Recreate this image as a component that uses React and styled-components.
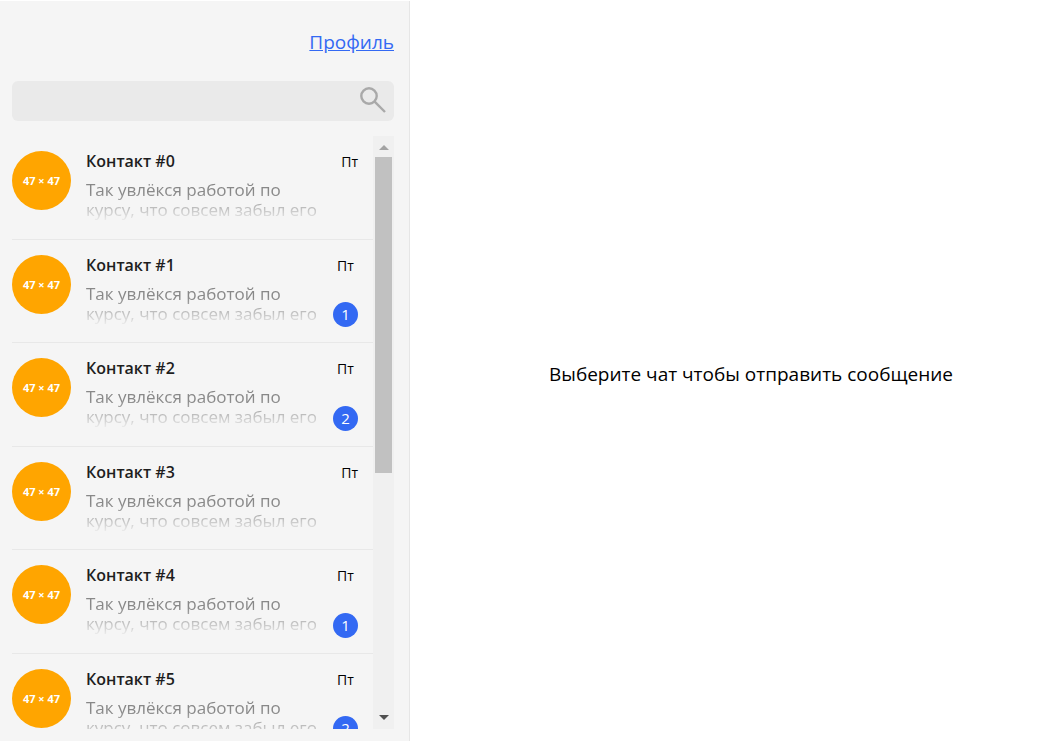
import React from "react";
import styled, { createGlobalStyle } from "styled-components";

const GlobalStyle = createGlobalStyle`
  *, *::before, *::after { box-sizing: border-box; }
  body {
    margin: 0;
    background: #fff;
    color: #000;
    font-family: "Open Sans", "Noto Sans", sans-serif;
  }
`;

const Page = styled.div`
  display: flex;
  height: 100vh;
  padding-top: 1px;
`;

const Sidebar = styled.aside`
  display: flex;
  flex-direction: column;
  flex: 0 0 410px;
  padding: 28px 15px 12px 12px;
  background: #f5f5f5;
  border-right: 1px solid #e6e6e6;
`;

const ProfileLink = styled.a`
  align-self: flex-end;
  color: #3369f3;
  font-size: 19px;
  line-height: 26px;
  text-decoration: underline;
`;

const Search = styled.label`
  display: flex;
  align-items: center;
  flex: none;
  height: 40px;
  margin: 26px 0 15px;
  padding-right: 8px;
  background: #eaeaea;
  border-radius: 6px;
`;

const SearchInput = styled.input`
  flex: 1;
  min-width: 0;
  height: 100%;
  padding: 0 12px;
  border: 0;
  outline: 0;
  background: transparent;
  font: inherit;
  font-size: 16px;
`;

const ListArea = styled.div`
  display: flex;
  flex: 1;
  min-height: 0;
`;

const ChatList = styled.ul`
  flex: 1;
  min-width: 0;
  margin: 0;
  padding: 0;
  overflow-x: hidden;
  overflow-y: auto;
  scrollbar-width: none;
  list-style: none;
`;

const Chat = styled.li`
  display: flex;
  height: 104px;
  padding: 15px 15px 15px 0;
  border-bottom: 1px solid #e8e8e8;

  &:nth-child(even) {
    height: 103px;
  }
`;

const Avatar = styled.div`
  display: flex;
  align-items: center;
  justify-content: center;
  flex: none;
  width: 59px;
  height: 59px;
  margin-right: 15px;
  border-radius: 50%;
  background: #ffa500;
  color: #fff;
  font-size: 11px;
  font-weight: 700;
`;

const ChatBody = styled.div`
  flex: 1;
  min-width: 0;
`;

const ChatName = styled.h2`
  margin: 0;
  color: #1e1e1e;
  font-size: 16px;
  font-weight: 600;
  line-height: 21px;
`;

const Preview = styled.p`
  width: 236px;
  margin: 8px 0 0;
  padding-bottom: 3px;
  color: #888;
  font-size: 17px;
  font-weight: 400;
  line-height: 20px;
  mask-image: linear-gradient(#000 30%, transparent 100%);
`;

const Meta = styled.div`
  display: flex;
  flex-direction: column;
  align-items: center;
  justify-content: space-between;
`;

const Day = styled.time`
  font-size: 14px;
  line-height: 21px;
`;

const Badge = styled.span`
  display: flex;
  align-items: center;
  justify-content: center;
  width: 25px;
  height: 25px;
  padding-bottom: 2px;
  border-radius: 50%;
  background: #3369f3;
  color: #fff;
  font-size: 15px;
  line-height: 20px;
`;

const ScrollBar = styled.div`
  display: flex;
  flex-direction: column;
  flex: none;
  width: 21px;
  padding: 0 2px;
  background: #f0f0f0;
`;

const ScrollArrow = styled.div`
  display: flex;
  align-items: center;
  justify-content: center;
  flex: none;
  height: 21px;
  padding: ${(p) => (p.$active ? "0 0 2px" : "2px 0 0")};
  color: ${(p) => (p.$active ? "#505050" : "#a3a3a3")};
`;

const ScrollTrack = styled.div`
  flex: 1;
  min-height: 0;
`;

const ScrollThumb = styled.div`
  height: 57.4%;
  background: #c1c1c1;
`;

const Main = styled.main`
  display: flex;
  align-items: center;
  justify-content: center;
  flex: 1;
  padding: 6px 0 0 30px;
`;

const Hint = styled.p`
  margin: 0;
  font-size: 19px;
  line-height: 26px;
`;

const message = "Так увлёкся работой по курсу, что совсем забыл его";
const chats = [0, 1, 2, 0, 1, 2].map((unread, index) => ({
  name: `Контакт #${index}`,
  unread,
}));

function SearchIcon() {
  return (
    <svg width="26" height="28" viewBox="0 0 26 28" fill="none" stroke="#a9a9a9" strokeWidth="2.4" aria-hidden="true">
      <circle cx="9" cy="9" r="7.7" />
      <path d="M14.4 14.4 25 25" />
    </svg>
  );
}

function Arrow({ down }) {
  return (
    <svg width="10" height="5" viewBox="0 0 10 5" fill="currentColor" aria-hidden="true">
      <path d={down ? "M0 0h10L5 5z" : "M0 5h10L5 0z"} />
    </svg>
  );
}

export default function App() {
  return (
    <>
      <GlobalStyle />
      <Page>
        <Sidebar>
          <ProfileLink href="#profile">Профиль</ProfileLink>
          <Search>
            <SearchInput type="text" aria-label="Поиск" />
            <SearchIcon />
          </Search>
          <ListArea>
            <ChatList>
              {chats.map((chat) => (
                <Chat key={chat.name}>
                  <Avatar>47 × 47</Avatar>
                  <ChatBody>
                    <ChatName>{chat.name}</ChatName>
                    <Preview>{message}</Preview>
                  </ChatBody>
                  <Meta>
                    <Day>Пт</Day>
                    {chat.unread > 0 && <Badge>{chat.unread}</Badge>}
                  </Meta>
                </Chat>
              ))}
            </ChatList>
            <ScrollBar aria-hidden="true">
              <ScrollArrow><Arrow /></ScrollArrow>
              <ScrollTrack><ScrollThumb /></ScrollTrack>
              <ScrollArrow $active><Arrow down /></ScrollArrow>
            </ScrollBar>
          </ListArea>
        </Sidebar>
        <Main>
          <Hint>Выберите чат чтобы отправить сообщение</Hint>
        </Main>
      </Page>
    </>
  );
}
